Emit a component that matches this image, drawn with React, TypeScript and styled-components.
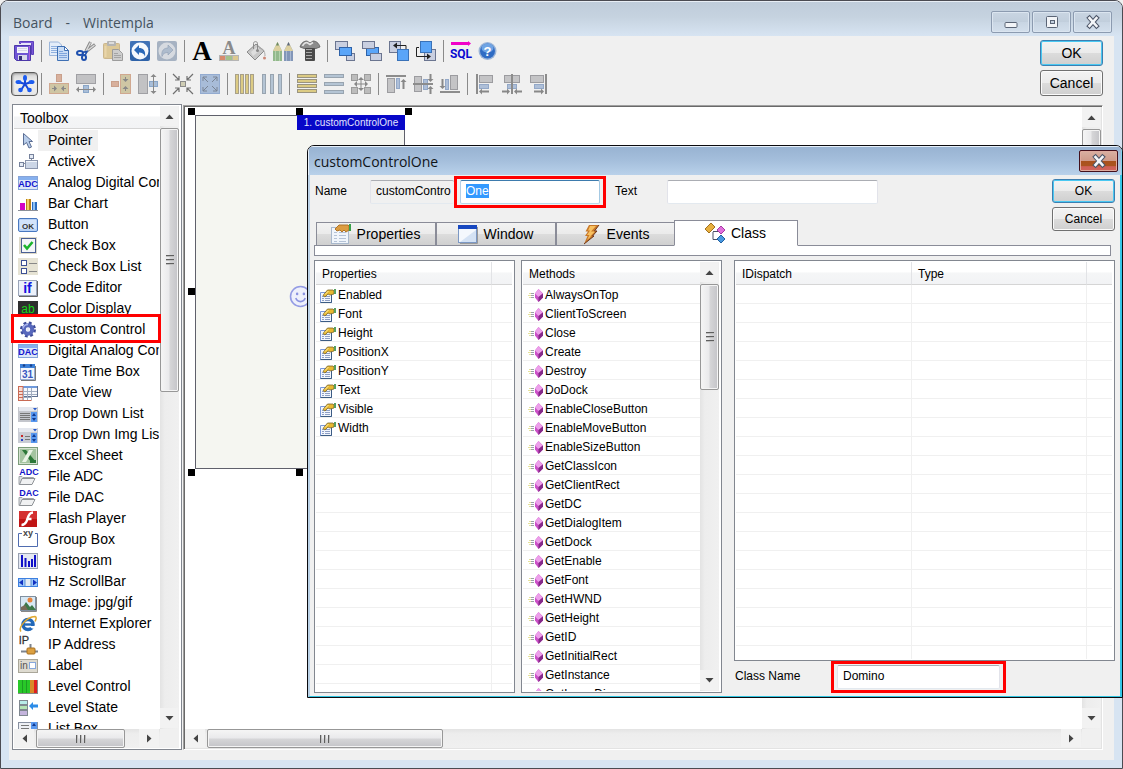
import React, { useEffect, useRef } from 'react';
import styled, { createGlobalStyle, css } from 'styled-components';

const GlobalStyle = createGlobalStyle`
  * { box-sizing: border-box; }
  body {
    margin: 0;
    background: #f0f0f0;
    font-family: "Liberation Sans", Arial, sans-serif;
    font-size: 12px;
    color: #000;
  }
  button, input { font-family: inherit; color: inherit; }
  ::selection { background: #3399ff; color: #fff; }
`;

/* ---------- window frames ---------- */

const Desktop = styled.div`
  position: relative;
  height: 100vh;
  min-height: 600px;
`;

const BoardWindow = styled.main`
  height: 100%;
  display: flex;
  flex-direction: column;
  border: 1px solid #4b4b52;
  border-radius: 8px 8px 0 0;
  background: #d7e4f2;
  overflow: hidden;
`;

const BoardTitle = styled.header`
  height: 35px;
  flex: none;
  display: flex;
  justify-content: space-between;
  padding: 9px 10px 0 12px;
  border-top: 1px solid #e8eef5;
  background: linear-gradient(#bfccda, #c6d3e0 45%, #d7e4f2);
`;

const TitleText = styled.h1<{ $tone: string }>`
  margin: 0;
  display: flex;
  gap: 13px;
  font: 14px/24px "Open Sans", "Noto Sans", sans-serif;
  color: ${(p) => p.$tone};
`;

const CaptionButtons = styled.div`
  display: flex;
  gap: 2px;
`;

const CaptionButton = styled.button`
  width: 39px;
  height: 22px;
  padding: 0;
  display: grid;
  place-items: center;
  border: 1px solid #8c9bb0;
  border-radius: 2px;
  background: linear-gradient(#c9d5e2, #c1cedc 50%, #c8d5e3 50%, #d3dfec);
  box-shadow: inset 0 0 0 1px #dbe5f0;
`;

const BoardClient = styled.div`
  flex: 1;
  min-height: 0;
  margin: 0 8px 8px;
  padding: 4px 11px 10px 3px;
  display: flex;
  flex-direction: column;
  background: #f0f0f0;
`;

/* ---------- toolbar ---------- */

const ToolArea = styled.div`
  height: 64px;
  flex: none;
  display: flex;
  justify-content: space-between;
`;

const ToolRows = styled.div`
  display: flex;
  flex-direction: column;
  gap: 13px;
  padding: 1px 0 0 2px;
`;

const ToolRow = styled.div`
  height: 20px;
  display: flex;
  align-items: center;
  gap: 7px;
`;

const ToolButton = styled.button<{ $pressed?: boolean }>`
  flex: none;
  width: 20px;
  height: 20px;
  padding: 0;
  border: 0;
  background: none;
  display: grid;
  place-items: center;
  ${(p) =>
    p.$pressed &&
    css`
      width: 27px;
      height: 24px;
      margin: 0 -4px 0 -3px;
      border: 1px solid #5a5a5a;
      border-radius: 4px;
      background: linear-gradient(#d2d2d2, #f0f0f0 40%, #e6e6e6);
      box-shadow: inset 1px 1px 2px #9a9a9a;
    `}
`;

const Separator = styled.span`
  flex: none;
  width: 1px;
  height: 22px;
  background: #8a8a8a;
`;

const Glyph = styled.svg<{ $w?: number; $h?: number }>`
  display: block;
  flex: none;
  overflow: visible;
  width: ${(p) => p.$w ?? 20}px;
  height: ${(p) => p.$h ?? 20}px;
`;

const ButtonColumn = styled.div<{ $top?: number }>`
  flex: none;
  width: 63px;
  display: flex;
  flex-direction: column;
  gap: 4px;
  padding-top: ${(p) => p.$top ?? 0}px;
`;

const PushButton = styled.button<{ $primary?: boolean; $small?: boolean }>`
  height: ${(p) => (p.$small ? 24 : 26)}px;
  padding: 0;
  font-size: ${(p) => (p.$small ? 12 : 14)}px;
  line-height: 16px;
  border: 1px solid ${(p) => (p.$primary ? '#3c7fb1' : '#707070')};
  border-radius: 3px;
  background: linear-gradient(#f3f3f3, #ebebeb 50%, #dcdcdc 50%, #cfcfcf);
  box-shadow: inset 0 0 0 1px ${(p) => (p.$primary ? '#49c8f2' : '#fbfbfb')};
`;

/* ---------- scroll bars ---------- */

const Bar = styled.div<{ $v?: boolean }>`
  flex: none;
  display: flex;
  flex-direction: ${(p) => (p.$v ? 'column' : 'row')};
  ${(p) => (p.$v ? 'width: 19px; padding-bottom: 1px;' : 'height: 19px; padding-right: 1px;')}
  background: linear-gradient(${(p) => (p.$v ? '90deg' : '180deg')}, #e3e3e3, #ededed 25%, #f0f0f0);
`;

const ArrowButton = styled.button<{ $v?: boolean }>`
  flex: none;
  ${(p) => (p.$v ? 'height: 20px; width: 18px;' : 'width: 20px; height: 18px;')}
  padding: 0;
  border: 0;
  display: grid;
  place-items: center;
  background: #f2f2f2;
`;

const Thumb = styled.div<{ $v?: boolean; $len: number }>`
  flex: 0 1 ${(p) => p.$len}px;
  ${(p) => (p.$v ? 'margin-top: 2px;' : 'margin-left: 2px;')}
  border: 1px solid #979797;
  border-radius: 2px;
  display: flex;
  flex-direction: ${(p) => (p.$v ? 'column' : 'row')};
  align-items: center;
  justify-content: center;
  gap: 2px;
  background: linear-gradient(
    ${(p) => (p.$v ? '90deg' : '180deg')},
    #f5f5f5, #e9e9eb 48%, #d6d6d8 52%, #c4c4c8
  );
  box-shadow: inset 0 0 0 1px #f4f4f4;
`;

const Grip = styled.i<{ $v?: boolean }>`
  ${(p) => (p.$v ? 'width: 8px; height: 2px;' : 'width: 2px; height: 8px;')}
  background: linear-gradient(${(p) => (p.$v ? '180deg' : '90deg')}, #5f5f5f 50%, #c0c0c0 50%);
`;

const Spring = styled.div`
  flex: 1;
`;

function Arrow({ dir }: { dir: 'up' | 'down' | 'left' | 'right' }) {
  const d = {
    up: 'M0.5 7 L4.5 2.5 L8.5 7Z',
    down: 'M0.5 2 L8.5 2 L4.5 6.5Z',
    left: 'M7 0.5 L2.5 4.5 L7 8.5Z',
    right: 'M2 0.5 L6.5 4.5 L2 8.5Z',
  }[dir];
  return (
    <Glyph $w={9} $h={9} viewBox="0 0 9 9">
      <path d={d} fill="#444" />
    </Glyph>
  );
}

function ScrollBar({ vertical, thumb }: { vertical?: boolean; thumb: number }) {
  return (
    <Bar $v={vertical}>
      <ArrowButton $v={vertical} aria-label="Scroll back">
        <Arrow dir={vertical ? 'up' : 'left'} />
      </ArrowButton>
      <Thumb $v={vertical} $len={thumb}>
        <Grip $v={vertical} />
        <Grip $v={vertical} />
        <Grip $v={vertical} />
      </Thumb>
      <Spring />
      <ArrowButton $v={vertical} aria-label="Scroll forward">
        <Arrow dir={vertical ? 'down' : 'right'} />
      </ArrowButton>
    </Bar>
  );
}

/* ---------- toolbox ---------- */

const Workspace = styled.div`
  flex: 1;
  min-height: 0;
  display: flex;
  gap: 1px;
`;

const ToolboxPanel = styled.aside`
  flex: none;
  width: 170px;
  display: flex;
  flex-direction: column;
  border: 1px solid #828790;
  padding: 1px 2px 1px 1px;
  background: #fff;
`;

const ToolboxBody = styled.div`
  flex: 1;
  min-height: 0;
  display: flex;
`;

const ToolboxColumn = styled.div`
  flex: 1;
  min-width: 0;
  overflow: hidden;
`;

const ToolboxHead = styled.h2`
  margin: 0;
  height: 23px;
  padding: 1px 0 0 6px;
  font-size: 14px;
  line-height: 22px;
  font-weight: normal;
  border-bottom: 1px solid #d5d5d5;
  background: linear-gradient(#fff 45%, #f4f5f6 50%, #f2f3f5);
`;

const ToolboxItems = styled.ul`
  list-style: none;
  margin: 0;
  padding: 1px 1px 0 4px;
`;

const ToolboxItem = styled.li`
  display: flex;
  height: 21px;
  align-items: center;
  overflow: hidden;
`;

const ToolboxLabel = styled.span<{ $current?: boolean }>`
  padding: 0 6px 0 10px;
  font-size: 14px;
  line-height: 21px;
  white-space: nowrap;
  background: ${(p) => (p.$current ? '#f0f0f0' : 'none')};
`;

const ToolboxMark = styled.div`
  position: absolute;
  left: 11px;
  top: 314px;
  width: 150px;
  height: 29px;
  border: 3px solid #f00;
`;

/* ---------- design canvas ---------- */

const CanvasPanel = styled.section`
  flex: 1;
  min-width: 0;
  margin-top: 1px;
  display: flex;
  flex-direction: column;
  border: 1px solid;
  border-color: #a0a0a0 #fff #fff #a0a0a0;
  box-shadow: inset 1px 1px 0 #696969, inset -1px -1px 0 #e3e3e3;
  padding: 1px;
  background: #f0f0f0;
`;

const CanvasBody = styled.div`
  flex: 1;
  min-height: 0;
  display: flex;
`;

const CanvasSurface = styled.div`
  flex: 1;
  position: relative;
  overflow: hidden;
  background: #fff;
`;

const BarRow = styled.div`
  display: flex;
  padding-right: 19px;
  background: #f0f0f0;
  & > * { flex: 1; }
`;

const DesignedControl = styled.div`
  position: absolute;
  left: 10px;
  top: 8px;
  width: 210px;
  height: 354px;
  padding-top: 8px;
  border: 1px solid #5f606b;
  background: #f5f6f1;
  display: grid;
  place-items: center;
`;

const ControlTag = styled.div`
  position: absolute;
  right: -1px;
  top: -1px;
  width: 108px;
  height: 15px;
  background: #0707c8;
  color: #e4e4ff;
  font-size: 10px;
  line-height: 15px;
  text-align: center;
  white-space: nowrap;
`;

const Handle = styled.i<{ $x: number; $y: number }>`
  position: absolute;
  left: ${(p) => p.$x}px;
  top: ${(p) => p.$y}px;
  width: 7px;
  height: 7px;
  background: #000;
`;

/* ---------- dialog ---------- */

const DialogWindow = styled.section`
  position: absolute;
  left: 307px;
  right: 0;
  top: 145px;
  bottom: 71px;
  display: flex;
  flex-direction: column;
  border: 1px solid #0b0b0f;
  border-radius: 7px 7px 0 0;
  background: #f0f0f0;
  overflow: hidden;
`;

const DialogTitle = styled.header`
  flex: none;
  height: 29px;
  display: flex;
  justify-content: space-between;
  padding: 3px 3px 0 5px;
  border-top: 1px solid #e6f0fa;
  border-left: 1px solid #e6f0fa;
  border-right: 1px solid #7fd3ee;
  background: linear-gradient(#98b3d2, #a5bfdc 50%, #b9d1ea);
`;

const DialogClose = styled.button`
  width: 39px;
  height: 22px;
  padding: 0;
  display: grid;
  place-items: center;
  border: 1px solid #43101c;
  border-radius: 2px;
  background: linear-gradient(#d9b0a2, #cf9b8b 48%, #a9511c 50%, #ab5420 75%, #cf6058 78%, #d0655c);
  box-shadow: inset 0 0 0 1px #dfab9f;
`;

const DialogBody = styled.div`
  flex: 1;
  min-height: 0;
  display: flex;
  flex-direction: column;
  padding-top: 1px;
  border-left: 2px solid #bcd3e8;
  border-right: 2px solid #35c8e8;
  border-bottom: 1px solid #2fc4e0;
`;

const DialogTop = styled.div`
  flex: none;
  height: 70px;
  display: flex;
  justify-content: space-between;
  padding: 0 5px;
`;

const DialogForm = styled.div`
  flex: 1;
  display: flex;
  flex-direction: column;
  gap: 12px;
`;

const FieldRow = styled.div`
  flex: none;
  height: 32px;
  display: flex;
  align-items: center;
`;

const FieldLabel = styled.label<{ $w: number; $gap?: number }>`
  flex: none;
  width: ${(p) => p.$w}px;
  margin-left: ${(p) => p.$gap ?? 0}px;
  padding-bottom: 3px;
  line-height: 16px;
`;

const TextField = styled.input<{ $w: number; $active?: boolean }>`
  flex: none;
  width: ${(p) => p.$w}px;
  height: 24px;
  padding: 0 5px 3px;
  font-size: 12px;
  border: 1px solid;
  border-color: ${(p) => (p.$active ? '#3d7bad #a4c9e3 #b7d9ed #b5cfe7' : '#abadb3 #e2e3ea #e3e9ef #e2e3ea')};
  border-radius: 2px;
  background: #fff;
  outline: none;
  &:read-only {
    background: #f0f0f0;
    padding-right: 0;
    border-right: 0;
  }
`;

const RedFrame = styled.div`
  flex: none;
  padding: 1px 3px;
  border: 3px solid #f00;
  display: flex;
`;

const Tabs = styled.div`
  display: flex;
  align-items: flex-end;
  height: 26px;
  padding-left: 1px;
`;

const Tab = styled.button<{ $selected?: boolean; $w: number }>`
  position: relative;
  width: ${(p) => p.$w}px;
  height: ${(p) => (p.$selected ? 26 : 24)}px;
  padding: 0 1px 1px 0;
  margin-left: ${(p) => (p.$selected ? -1 : 0)}px;
  display: flex;
  align-items: center;
  justify-content: center;
  gap: 6px;
  font-size: 14px;
  border: 1px solid #8a8c98;
  ${(p) =>
    p.$selected
      ? 'border-bottom-color: #fff; background: #fff; z-index: 1;'
      : 'background: linear-gradient(#f2f2f2, #ebebeb 48%, #dcdcdc 52%, #d0d0d0);'}
`;

const TabPane = styled.div`
  flex: none;
  height: 11px;
  margin: -1px 9px 4px 4px;
  border: 1px solid #8a8c98;
  background: #fff;
`;

const Lists = styled.div`
  flex: 1;
  min-height: 0;
  display: flex;
  padding: 0 5px 3px 4px;
`;

const ListPanel = styled.div<{ $fill?: boolean; $gap?: number }>`
  flex: ${(p) => (p.$fill ? '1 1 0' : '0 0 201px')};
  min-height: 0;
  margin-right: ${(p) => p.$gap ?? 0}px;
  display: flex;
  border: 1px solid #828790;
  padding: 1px 2px 1px 1px;
  background: #fff;
`;

const ListClip = styled.div`
  flex: 1;
  min-width: 0;
  overflow: hidden;
`;

const Grid = styled.table`
  width: 100%;
  table-layout: fixed;
  border-collapse: separate;
  border-spacing: 0;
`;

const HeadCell = styled.th<{ $w?: number }>`
  ${(p) => (p.$w ? `width: ${p.$w}px;` : '')}
  height: 23px;
  padding: 2px 0 0 6px;
  font-weight: normal;
  text-align: left;
  line-height: 16px;
  border-bottom: 1px solid #d5d5d5;
  background: linear-gradient(#fff 45%, #f5f6f7 50%, #f2f3f5);
  &:not(:last-child) { border-right: 1px solid #e2e3e6; }
`;

const Cell = styled.td<{ $indent?: number }>`
  height: 19px;
  padding: 3px 0 0 ${(p) => p.$indent ?? 4}px;
  line-height: 15px;
  border-bottom: 1px solid #f0f0f0;
  white-space: nowrap;
  &:not(:last-child) { border-right: 1px solid #f0f0f0; }
`;

const Entry = styled.span`
  display: flex;
  align-items: center;
  gap: 2px;
`;

const RightColumn = styled.div`
  flex: 1;
  min-width: 0;
  display: flex;
  flex-direction: column;
`;

/* ---------- icons, drawn on a 20 x 20 grid ---------- */

const small = { fontFamily: 'Liberation Sans', fontWeight: 700 } as const;

const arrowHead = (x: number, y: number, dir: 'l' | 'r' | 'u' | 'd') => {
  const d = {
    l: `M${x} ${y}l3 -3v6z`,
    r: `M${x} ${y}l-3 -3v6z`,
    u: `M${x} ${y}l-3 3h6z`,
    d: `M${x} ${y}l-3 -3h6z`,
  }[dir];
  return <path d={d} fill="#888" />;
};

const box = (x: number, y: number, w: number, h: number, fill: string, stroke: string) => (
  <rect x={x + 0.5} y={y + 0.5} width={w - 1} height={h - 1} fill={fill} stroke={stroke} />
);

const icons: Record<string, React.ReactNode> = {
  save: (
    <>
      <path d="M5.500 .5h14v13h-2v-11h-12z" fill="#7a5ad8" stroke="#5c40bc" />
      <path d="M7 2h10v2H7z" fill="#e8e6fa" />
      <path d="M.5 4.500h16v15H2.500l-2-2z" fill="#6f54d4" stroke="#4c38a8" />
      <rect x="3" y="6" width="11" height="6" fill="#f2f2fa" />
      <path d="M4 7.500h9M4 9.500h9" stroke="#d5d5e6" />
      <rect x="4" y="14" width="9" height="5" fill="#d8d8ea" />
      <rect x="5" y="15" width="3" height="4" fill="#33307a" />
      <path d="M15.500 5v14" stroke="#a95fe0" />
    </>
  ),
  copy: (
    <>
      <path d="M.5 1h9l3 3v10.500H.5z" fill="#e4edf9" stroke="#9cb6da" />
      <path d="M2 5.500h7M2 7.500h7M2 9.500h7M2 11.500h7" stroke="#8fb0de" />
      <path d="M8.500 5.500h7l4 4v10h-11z" fill="#c8dcf5" stroke="#3f70b4" />
      <path d="M15.500 5.500v4h4z" fill="#fff" stroke="#3f70b4" />
      <path d="M10 10.500h4M10 12.500h8M10 14.500h8M10 16.500h8" stroke="#7fa5dc" />
    </>
  ),
  cut: (
    <>
      <path d="M14.500 1 10 10M19 3.500 9 11.500" stroke="#8a8a8a" strokeWidth="3" />
      <path d="M14.500 1.500 10 10M18.500 4 9 11.500" stroke="#dcdcdc" strokeWidth="1.300" />
      <ellipse cx="4" cy="12" rx="3" ry="2" fill="none" stroke="#1d4fae" strokeWidth="2" />
      <ellipse cx="8" cy="16.500" rx="2" ry="2.600" fill="none" stroke="#1d4fae" strokeWidth="2" />
      <path d="M6.500 11.500 11 10.500l-2 4" stroke="#1d4fae" strokeWidth="1.600" fill="none" />
    </>
  ),
  paste: (
    <>
      <rect x=".5" y="2.500" width="16" height="15" rx="1" fill="#dcc898" stroke="#cbb68e" />
      <rect x="4" y="0" width="9" height="5" rx="1" fill="#b4b4b4" />
      <rect x="6" y="1" width="5" height="2" fill="#dcdcdc" />
      <path d="M2.500 5v11" stroke="#e9d5aa" strokeWidth="2" />
      <path d="M9.500 8.500h6l4 4v7h-10z" fill="#cdcdcd" stroke="#9c9c9c" />
      <path d="M11 12.500h4M11 14.500h7M11 16.500h7" stroke="#a4a4a4" />
    </>
  ),
  undo: (
    <>
      <rect width="20" height="20" rx="2" fill="#2e62a8" />
      <path d="M0 0h20v8H0z" fill="#4a7cc0" opacity=".6" />
      <circle cx="10" cy="10" r="8.500" fill="#f4f8fd" />
      <path d="M4 9l5-5v3c4 0 7 2.500 6 8.500-1-3-3-4-6-4V14z" fill="#2a68b8" />
    </>
  ),
  redo: (
    <>
      <rect width="20" height="20" rx="2" fill="#a6b2c2" />
      <circle cx="10" cy="10" r="8.500" fill="#d6dae0" />
      <path d="M16 9l-5-5v3c-4 0-7 2.500-6 8.500 1-3 3-4 6-4V14z" fill="#aebccd" stroke="#8e9eb4" strokeWidth=".6" />
    </>
  ),
  fontA: (
    <text x="10" y="19" textAnchor="middle" fontFamily="Liberation Serif" fontWeight="700" fontSize="27" fill="#000">A</text>
  ),
  fontColor: (
    <>
      <text x="10" y="13" textAnchor="middle" fontFamily="Liberation Serif" fontWeight="700" fontSize="18" fill="#8a8a8a">A</text>
      <rect x="0" y="14" width="20" height="6" fill="#b5b5b5" />
      <rect x="1" y="15" width="5" height="4" fill="#d88a6c" />
      <rect x="7" y="15" width="6" height="4" fill="#a4c08a" />
      <rect x="14" y="15" width="5" height="4" fill="#dcc890" />
    </>
  ),
  bucket: (
    <>
      <path d="M1 11 10 3l8 7-9 9z" fill="#c8c8c8" stroke="#8a8a8a" />
      <path d="M5 11l6-5 3 3-7 6z" fill="#dedede" />
      <path d="M7.500 8V2.500c0-2.500 4-2.500 4 0V9" fill="none" stroke="#8a8a8a" />
      <circle cx="11.500" cy="9.500" r="1.500" fill="#888" />
      <path d="M13 7c4 0 6 3 6 8" stroke="#aaa" fill="none" />
      <circle cx="18.500" cy="17" r="1.500" fill="#cc8a78" />
    </>
  ),
  pencils: (
    <>
      <path d="M0 10 4.500 1 9 10v10H0z" fill="#93b98c" />
      <path d="M0 10 4.500 1 9 10z" fill="#dcd0a0" />
      <path d="M4.500 1 3 4.500h3z" fill="#6c8a66" />
      <path d="M2.500 10v10M6.500 10v10" stroke="#b4d2ae" />
      <path d="M11 10l4.500-9L20 10v10h-9z" fill="#8296b8" />
      <path d="M11 10l4.500-9L20 10z" fill="#dcd0a0" />
      <path d="M15.500 1 14 4.500h3z" fill="#5c6880" />
      <path d="M13.500 10v10M17.500 10v10" stroke="#a8b8d2" />
    </>
  ),
  screw: (
    <>
      <path d="M0 6C1 2 4 0 7 0l3 2 3-2c3 0 6 2 7 6l-4 1.500H4z" fill="#8c8c8c" stroke="#5c5c5c" strokeWidth=".8" />
      <path d="M2.500 5c1-2 3-3.500 4.500-3.500L10 3.500l3-2" fill="none" stroke="#e4e4e4" strokeWidth="1.600" />
      <rect x="5" y="7" width="10" height="13" rx="1" fill="#4a4a4a" />
      <path d="M6 8.500h6M6 11.500h6M6 14.500h6M6 17.500h6" stroke="#a8a8a8" />
    </>
  ),
  front: (
    <>
      {box(0, 0, 13, 9, '#c9cfe0', '#6b7590')}
      {box(11, 12, 9, 8, '#c9cfe0', '#6b7590')}
      {box(4, 6, 13, 9, '#5aa5f8', '#2f62a8')}
    </>
  ),
  back: (
    <>
      {box(4, 6, 13, 9, '#5aa5f8', '#2f62a8')}
      {box(0, 0, 13, 8, '#c9cfe0', '#6b7590')}
      {box(8, 12, 12, 8, '#c9cfe0', '#6b7590')}
    </>
  ),
  forward: (
    <>
      {box(0, 0, 12, 12, '#c9cfe0', '#6b7590')}
      {box(8, 8, 12, 12, '#5aa5f8', '#3a72b8')}
      <path d="M7 4.500h10V8" fill="none" stroke="#222" />
      <path d="M4 4.500l4-3v6z" fill="#222" />
    </>
  ),
  backward: (
    <>
      {box(8, 8, 12, 12, '#c9cfe0', '#6b7590')}
      {box(4, 0, 12, 12, '#5aa5f8', '#3a72b8')}
      <path d="M3 6.500H.5v9H12" fill="none" stroke="#222" />
      <path d="M15 15.500l-4-3v6z" fill="#222" />
    </>
  ),
  sql: (
    <>
      <path d="M0 1h17V0l3 2.500L17 5V4H0z" fill="#f000c8" />
      <text x="10" y="17" textAnchor="middle" {...small} fontFamily="Roboto" fontSize="12" fill="#0a0ad0">SQL</text>
    </>
  ),
  help: (
    <>
      <circle cx="9.500" cy="10" r="9" fill="#9ab4d8" />
      <circle cx="9.500" cy="10" r="7.500" fill="#2f6cc4" />
      <ellipse cx="9.500" cy="7" rx="6" ry="4.500" fill="#6fa4e4" />
      <text x="9.500" y="15" textAnchor="middle" {...small} fontSize="13" fill="#fff">?</text>
    </>
  ),
  star: (
    <>
      <path d="M10 10V3M10 10 3.500 8M10 10l6.500-2M10 10l-4 6M10 10l4 6" stroke="#1748d8" strokeWidth="2" />
      <g fill="#1c5cf0">
        <ellipse cx="10" cy="4" rx="2" ry="3" />
        <ellipse cx="3.500" cy="8" rx="3" ry="2" />
        <ellipse cx="16.500" cy="8" rx="3" ry="2" />
        <circle cx="5.500" cy="16" r="2.300" />
        <circle cx="14.500" cy="16" r="2.300" />
      </g>
    </>
  ),
  centerH: (
    <>
      {box(7, 0, 6, 8, '#d8b09c', '#c9a08c')}
      {box(0, 9, 20, 11, '#cfc6a4', '#d0a890')}
      <path d="M3 14.500h4M13 14.500h4" stroke="#888" />
      {arrowHead(8, 14.5, 'r')}
      {arrowHead(12, 14.5, 'l')}
    </>
  ),
  widthSame: (
    <>
      {box(0, 0, 20, 10, '#c2c2c4', '#a0a0a4')}
      {box(7, 11, 6, 8, '#a9bed8', '#8aa6c8')}
      <path d="M2 15.500h16" stroke="#888" />
      {arrowHead(0, 15.5, 'l')}
      {arrowHead(20, 15.5, 'r')}
    </>
  ),
  centerV: (
    <>
      {box(0, 7, 8, 6, '#d8b09c', '#c9a08c')}
      {box(9, 0, 11, 20, '#cfc6a4', '#d0a890')}
      <path d="M14.500 3v4M14.500 13v4" stroke="#888" />
      {arrowHead(14.5, 8, 'd')}
      {arrowHead(14.5, 12, 'u')}
    </>
  ),
  heightSame: (
    <>
      {box(0, 0, 10, 20, '#c2c2c4', '#a0a0a4')}
      {box(11, 7, 9, 6, '#a9bed8', '#8aa6c8')}
      <path d="M15.500 2v16" stroke="#888" />
      {arrowHead(15.5, 0, 'u')}
      {arrowHead(15.5, 20, 'd')}
    </>
  ),
  shrink: (
    <>
      {box(7, 7, 6, 6, '#cfcdb4', '#8a8a8a')}
      <path d="M0 0l6 6M20 0l-6 6M0 20l6-6M20 20l-6-6M6 2v4H2M14 2v4h4M6 18v-4H2M14 18v-4h4" stroke="#707070" fill="none" strokeWidth="1.200" />
    </>
  ),
  expand: (
    <>
      {box(0, 0, 20, 20, '#a8bcd8', '#93abd0')}
      <path d="M3 3l5 5M17 3l-5 5M3 17l5-5M17 17l-5-5M3 7V3h4M13 3h4v4M3 13v4h4M13 17h4v-4" stroke="#7a8494" fill="none" />
    </>
  ),
  barsV4: <>{[0, 5, 10, 15].map((x) => <g key={x}>{box(x, 0, 4, 20, '#dccb84', '#a8a088')}</g>)}</>,
  barsV3: <>{[0, 8, 16].map((x) => <g key={x}>{box(x, 0, 4, 20, '#b4c4d4', '#98a4b0')}</g>)}</>,
  barsH4: <>{[0, 5, 10, 15].map((y) => <g key={y}>{box(0, y, 20, 4, '#dccb84', '#9a9480')}</g>)}</>,
  barsH3: <>{[0, 8, 16].map((y) => <g key={y}>{box(0, y, 20, 4, '#b4c4d4', '#98a4b0')}</g>)}</>,
  spread: (
    <>
      {box(0, 0, 7, 7, '#bcbcbc', '#9c9c9c')}
      {box(13, 0, 7, 7, '#bcbcbc', '#9c9c9c')}
      {box(0, 13, 7, 7, '#bcbcbc', '#9c9c9c')}
      {box(13, 13, 7, 7, '#bcbcbc', '#9c9c9c')}
      <path d="M10 5v10M5 10h10" stroke="#888" />
      {arrowHead(10, 3, 'u')}
      {arrowHead(10, 17, 'd')}
      {arrowHead(3, 10, 'l')}
      {arrowHead(17, 10, 'r')}
    </>
  ),
  alignTop: (
    <>
      <rect y="1" width="20" height="2" fill="#8c8c8c" />
      {box(1, 4, 8, 15, '#c4c4c6', '#9c9ca0')}
      {box(10, 4, 4, 11, '#aebfd8', '#93a8c8')}
      <path d="M17.500 7v8" stroke="#888" strokeWidth="2" />
      {arrowHead(17.5, 5, 'u')}
    </>
  ),
  alignMiddle: (
    <>
      {box(1, 2, 8, 16, '#c4c4c6', '#9c9ca0')}
      {box(10, 5, 5, 11, '#aebfd8', '#93a8c8')}
      <rect y="9" width="20" height="2" fill="#8c8c8c" />
      <path d="M17.500 0v5M17.500 20v-5" stroke="#888" strokeWidth="2" />
      {arrowHead(17.5, 8, 'd')}
      {arrowHead(17.5, 12, 'u')}
    </>
  ),
  alignBottom: (
    <>
      <rect y="17" width="20" height="2" fill="#8c8c8c" />
      {box(10, 1, 8, 15, '#c4c4c6', '#9c9ca0')}
      {box(5, 5, 4, 11, '#aebfd8', '#93a8c8')}
      <path d="M2.500 5v8" stroke="#888" strokeWidth="2" />
      {arrowHead(2.5, 15, 'd')}
    </>
  ),
  alignLeft: (
    <>
      <rect x="1" width="2" height="20" fill="#8c8c8c" />
      {box(4, 1, 14, 8, '#c4c4c6', '#9c9ca0')}
      {box(4, 10, 10, 5, '#aebfd8', '#93a8c8')}
      <path d="M7 17.500h7" stroke="#888" strokeWidth="2" />
      {arrowHead(4, 17.5, 'l')}
    </>
  ),
  alignCenter: (
    <>
      {box(2, 1, 16, 8, '#c4c4c6', '#9c9ca0')}
      {box(5, 10, 10, 5, '#aebfd8', '#93a8c8')}
      <rect x="9" width="2" height="20" fill="#8c8c8c" />
      <path d="M0 17.500h6M20 17.500h-6" stroke="#888" strokeWidth="2" />
      {arrowHead(8, 17.5, 'r')}
      {arrowHead(12, 17.5, 'l')}
    </>
  ),
  alignRight: (
    <>
      <rect x="16" width="2" height="20" fill="#8c8c8c" />
      {box(1, 1, 14, 8, '#c4c4c6', '#9c9ca0')}
      {box(5, 10, 10, 5, '#aebfd8', '#93a8c8')}
      <path d="M5 17.500h7" stroke="#888" strokeWidth="2" />
      {arrowHead(15, 17.5, 'r')}
    </>
  ),

  pointer: <path d="M5.500 2.500v11.500l3-2.500 2.500 5.500 2.500-1-2.500-5.500h3.500z" fill="#b8cdea" stroke="#5b6e94" />,
  activex: (
    <>
      <path d="M4 11.500h4M13.500 4v4" stroke="#8a93a4" />
      {box(11, 2, 5, 5, '#e4eaf4', '#76829c')}
      {box(1, 10, 5, 5, '#e4eaf4', '#76829c')}
      {box(7, 8, 13, 9, '#ccd6e6', '#8a95ac')}
      <path d="M8 9.500h11" stroke="#f2f6fb" />
    </>
  ),
  adc: (
    <>
      {box(0, 3, 20, 14, '#dde8f8', '#86a4d8')}
      <rect x="1" y="4" width="18" height="3" fill="#86b0ee" />
      <text x="10" y="14" textAnchor="middle" {...small} fontSize="9" fill="#1414d0">ADC</text>
    </>
  ),
  dac: (
    <>
      {box(0, 3, 20, 14, '#dde8f8', '#86a4d8')}
      <rect x="1" y="4" width="18" height="3" fill="#86b0ee" />
      <text x="10" y="14" textAnchor="middle" {...small} fontSize="9" fill="#1414d0">DAC</text>
    </>
  ),
  barChart: (
    <>
      <path d="M0 16.500h20" stroke="#8a8f98" />
      <rect x="2" y="9" width="5" height="7" fill="#d400c4" />
      <rect x="8" y="5" width="5" height="11" fill="#b8801c" />
      <rect x="9" y="5" width="2" height="11" fill="#f0cc60" />
      <rect x="14" y="8" width="5" height="8" fill="#2a6cc0" />
      <rect x="15" y="8" width="2" height="8" fill="#8fc0f4" />
    </>
  ),
  button: (
    <>
      <rect x=".5" y="3.500" width="19" height="13" rx="1.500" fill="#b8d2f6" stroke="#4878c0" />
      <rect x="2" y="5" width="16" height="9" fill="#d3e3fa" />
      <text x="10" y="14" textAnchor="middle" {...small} fontSize="8" fill="#333">OK</text>
    </>
  ),
  checkBox: (
    <>
      <rect x="1" y="1" width="18" height="17" fill="#ddd9c8" />
      {box(3, 2, 15, 15, '#f4f5f8', '#4a5f94')}
      <path d="M6 9l3 3.500L14.500 6" fill="none" stroke="#1cb42c" strokeWidth="2.600" />
    </>
  ),
  checkBoxList: (
    <>
      <rect x="0" y="1" width="20" height="17" fill="#e6e3d4" />
      {box(3, 3, 6, 6, '#fff', '#3c4f94')}
      {box(3, 11, 6, 6, '#fff', '#3c4f94')}
      <path d="M11 6.500h8M11 14.500h8" stroke="#888" />
    </>
  ),
  codeEditor: (
    <>
      <path d="M19.500 3v15.500H1" stroke="#666" fill="none" />
      {box(0, 2, 19, 16, '#ecf1fa', '#9aa4b8')}
      <text x="9.500" y="15" textAnchor="middle" {...small} fontSize="14" fill="#1414e0">if</text>
    </>
  ),
  colorDisplay: (
    <>
      <rect x="0" y="2" width="20" height="16" fill="#2e2e2e" />
      <text x="10" y="14" textAnchor="middle" fontFamily="Liberation Sans" fontSize="12" fill="#18d418">ab</text>
    </>
  ),
  custom: (
    <>
      <circle cx="10" cy="9.500" r="6.300" fill="none" stroke="#3c4a98" strokeWidth="3.400" strokeDasharray="2.600 2.350" />
      <circle cx="10" cy="9.500" r="4.200" fill="none" stroke="#5868bc" strokeWidth="4" />
      <circle cx="10" cy="9.500" r="1.500" fill="#e4e8f8" />
      <path d="M5 8.500a5 5 0 0 1 5-4" stroke="#a8b4ec" fill="none" strokeWidth="1.500" />
    </>
  ),
  dateTime: (
    <>
      <path d="M17.500 4v14.500H3" stroke="#777" fill="none" />
      {box(2, 2, 15, 16, '#f2f6fc', '#98aace')}
      <rect x="2" y="2" width="15" height="4" fill="#3c80d8" />
      <circle cx="6" cy="3.500" r="1.200" fill="#1a3f88" />
      <circle cx="13" cy="3.500" r="1.200" fill="#1a3f88" />
      <text x="9.500" y="15.500" textAnchor="middle" {...small} fontSize="10" fill="#3a58c0">31</text>
    </>
  ),
  dateView: (
    <>
      {box(0, 3, 20, 11, '#f6f8fc', '#5f7090')}
      <rect x="1" y="3" width="18" height="2" fill="#6f9adc" />
      <path d="M0 3.500h5v14H0z" fill="#f8dcd4" stroke="#d06850" />
      <path d="M1 8.500h18M1 11.500h18M1 14.500h13M5.500 5v12M9.500 5v12M13.500 5v12" stroke="#a0acc0" />
      <path d="M1 8.500h4M1 11.500h4M1 14.500h4M.5 3v14.500h13" stroke="#c86a54" fill="none" />
    </>
  ),
  dropDown: (
    <>
      <rect x="0" y="3" width="20" height="15" fill="#c4c6cc" />
      <rect x="1" y="3" width="18" height="4" fill="#e4e7ee" />
      <path d="M15 4h4l-2 2.500z" fill="#2858c8" />
      <path d="M2 9.500h10M2 11.500h10M2 13.500h10M2 15.500h10" stroke="#777" />
      <rect x="13" y="8" width="6" height="10" fill="#5898f0" />
      <path d="M14 12l2-3 2 3zM14 14l2 3 2-3z" fill="#123a90" />
    </>
  ),
  dropDownImg: (
    <>
      <rect x="0" y="3" width="20" height="15" fill="#c9ccd4" />
      <rect x="1" y="3" width="18" height="4" fill="#e4e7ee" />
      <path d="M15 4h4l-2 2.500z" fill="#2858c8" />
      <rect x="3" y="10" width="2" height="2" fill="#c82828" />
      <rect x="3" y="14" width="2" height="2" fill="#2840c8" />
      <path d="M7 11.500h5M7 14.500h5" stroke="#777" />
      <rect x="13" y="8" width="6" height="10" fill="#5898f0" />
      <path d="M14 12l2-3 2 3zM14 14l2 3 2-3z" fill="#123a90" />
    </>
  ),
  excel: (
    <>
      {box(0, 1, 20, 18, '#d4e2d0', '#7c9c7a')}
      <rect x="2" y="3" width="16" height="14" fill="#a4c4a0" />
      <path d="M4 4h4l10 12h-5z" fill="#2c7838" />
      <path d="M15 4h-4L4 16h4z" fill="#eaf3e6" />
      <path d="M12 14h6v3h-6z" fill="#2c7838" />
    </>
  ),
  fileAdc: (
    <>
      <path d="M1 9.500h3l1 1h10.500l-2.500 7H1z" fill="#dcdfe2" stroke="#a0a4a8" />
      <path d="M4 11.500h13l-3 6H1.500z" fill="#f0f1f2" stroke="#8e9296" />
      <text x="11" y="8" textAnchor="middle" {...small} fontSize="9" fill="#1414c8">ADC</text>
    </>
  ),
  fileDac: (
    <>
      <path d="M1 9.500h3l1 1h10.500l-2.500 7H1z" fill="#dcdfe2" stroke="#a0a4a8" />
      <path d="M4 11.500h13l-3 6H1.500z" fill="#f0f1f2" stroke="#8e9296" />
      <text x="11" y="8" textAnchor="middle" {...small} fontSize="9" fill="#1414c8">DAC</text>
    </>
  ),
  flash: (
    <>
      <rect x="1" y="2" width="18" height="16" fill="#c01414" />
      <rect x="1" y="2" width="18" height="8" fill="#d43030" />
      <path d="M15 3.500c-5 0-5 6-6.500 9S6 16 3.500 16M8.500 10h5" fill="none" stroke="#fff" strokeWidth="2.400" />
    </>
  ),
  groupBox: (
    <>
      <path d="M4 3.500H.5v13h19v-13H17" fill="none" stroke="#4f6cb0" />
      <text x="10" y="6" textAnchor="middle" {...small} fontSize="9" fill="#444">xy</text>
    </>
  ),
  histogram: (
    <>
      {box(0, 2, 20, 16, '#e4e8f2', '#98a0b0')}
      <path d="M4 4v12M7.500 7v9M11 10v6M14 8v8M17 4v12" stroke="#1010c8" strokeWidth="2" />
    </>
  ),
  hzScroll: (
    <>
      {box(0, 6, 20, 9, '#9cc6fa', '#3c80e0')}
      <rect x="7" y="7" width="6" height="7" fill="#e4ecf4" />
      <path d="M5 7.500v6l-4-3zM15 7.500v6l4-3z" fill="#1030c0" />
      <path d="M7 7v7M13 7v7" stroke="#5a90d8" />
    </>
  ),
  image: (
    <>
      <path d="M18.500 4v14.500H3" stroke="#888" fill="none" />
      {box(2, 3, 16, 15, '#d8e8f4', '#8090a0')}
      <circle cx="12" cy="7" r="2.500" fill="#e8843c" />
      <path d="M3 17l5-8 4 5 2-2 4 5z" fill="#3c7848" />
      <path d="M3 17v-3l4-2 3 5z" fill="#7a6a58" />
    </>
  ),
  explorer: (
    <>
      <circle cx="10" cy="10.500" r="5" fill="none" stroke="#2268b8" strokeWidth="3.600" />
      <path d="M6 10.500h9.500" stroke="#2268b8" strokeWidth="2.400" />
      <path d="M11 12h7v2.500h-4z" fill="#fff" />
      <path d="M3 17.500C0 14 8 3 17 2.500c2 .5 1 3 0 5" fill="none" stroke="#e0a830" strokeWidth="1.500" />
    </>
  ),
  ip: (
    <>
      <text x="6" y="9" textAnchor="middle" fontFamily="Liberation Sans" fontSize="11" fill="#333" stroke="#333" strokeWidth=".3">IP</text>
      <path d="M3 16.500h17M12.500 9v5" stroke="#7d848e" strokeWidth="2" />
      <rect x="9" y="13" width="8" height="6" rx="1" fill="#dca040" stroke="#a87020" />
    </>
  ),
  label: (
    <>
      {box(0, 3, 20, 14, '#dedbd0', '#aaa79a')}
      <text x="6" y="13" textAnchor="middle" fontFamily="Liberation Sans" fontSize="10" fill="#555">in</text>
      {box(11, 6, 7, 7, '#fff', '#88a8dc')}
    </>
  ),
  levelControl: (
    <>
      <rect x="0" y="3" width="20" height="14" fill="#888" />
      <rect x="0" y="3" width="12" height="13" fill="#28c828" />
      <rect x="12" y="3" width="4" height="13" fill="#d88a28" />
      <rect x="16" y="3" width="3" height="13" fill="#e02020" />
      <path d="M4.500 3v13M8.500 3v13" stroke="#1d9c24" />
    </>
  ),
  levelState: (
    <>
      {box(1, 2, 9, 5, '#b8ece8', '#808890')}
      {box(1, 7, 9, 5, '#b4e4b4', '#808890')}
      {box(1, 12, 9, 6, '#c4b4dc', '#808890')}
      <path d="M11 8l4-4v2.500h5v3h-5V12z" fill="#2c8ce8" />
    </>
  ),
  listBox: (
    <>
      {box(0, 3, 20, 15, '#eef0f4', '#8890a0')}
      <path d="M3 6.500h8M3 9.500h8" stroke="#777" />
      <rect x="13" y="3" width="6" height="7" fill="#5898f0" />
      <path d="M14 7l2-3 2 3z" fill="#123a90" />
    </>
  ),
  propertyTab: (
    <>
      {box(0, 3, 18, 17, '#f0f5fb', '#a8b8cc')}
      <path d="M3 8.500h3M8 8.500h7M3 11.500h3M8 11.500h7M3 14.500h3M8 14.500h7M3 17.500h3M8 17.500h7" stroke="#b4c2d6" />
      <path d="M4 5l4-4h9l1 1v4l-3 2-2-2-2 2-2-2-3 1z" fill="#dc9c40" stroke="#b07428" />
      <rect x="18" y="0" width="2" height="7" fill="#38a048" />
    </>
  ),
  window: (
    <>
      <path d="M19.500 3v16.500H2" stroke="#999" fill="none" />
      {box(0, 2, 19, 17, '#f4f8fd', '#7c98c4')}
      <rect x="0" y="1" width="19" height="4" fill="#1848c0" />
      <path d="M18 6v12H2z" fill="#d4e2f4" />
    </>
  ),
  bolt: (
    <>
      <path d="M8 1h10l-4.500 6H16l-4.500 5H13L3 20l3.500-8H4l3-4.500H4.500z" fill="#c87828" />
      <path d="M9 2h6l-5 5.500h4L9 12.500h1L6 16l2.500-5H6l3-4.500H7z" fill="#f8c060" />
      <path d="M18 1l-4.500 6H16l-4.500 5H13L3 20" stroke="#6e3418" fill="none" />
    </>
  ),
  classes: (
    <>
      <path d="M8 9v7.500h5M8 8.500h6" stroke="#4a5068" fill="none" />
      <path d="M0 6l6-6 4 4-6 6z" fill="#e8b040" stroke="#a07020" />
      <path d="M12 7l4-4 4 4-4 4z" fill="#e070dc" stroke="#a838a4" />
      <path d="M12 16l4-4 4 4-4 4z" fill="#4898e0" stroke="#2060a0" />
    </>
  ),
  smiley: (
    <>
      <circle cx="10" cy="10" r="9.500" fill="#eef0fb" stroke="#949ce4" strokeWidth="1.500" />
      <circle cx="6.800" cy="7.500" r="1.200" fill="#8a92e0" />
      <circle cx="13.200" cy="7.500" r="1.200" fill="#8a92e0" />
      <path d="M5.500 11.500c1.500 4.500 7.500 4.500 9 0" fill="none" stroke="#8a92e0" strokeWidth="1.500" />
    </>
  ),
};

function Icon({ name, size = 20 }: { name: string; size?: number }) {
  return (
    <Glyph $w={size} $h={size} viewBox="0 0 20 20" aria-hidden="true">
      {icons[name]}
    </Glyph>
  );
}

function PropertyIcon() {
  return (
    <Glyph $w={16} $h={14} viewBox="0 0 16 14" aria-hidden="true">
      <path d="M.5 3.500h11v10H.5z" fill="#f2f6fd" stroke="#7a98d8" />
      <path d="M11.500 6v7.500H.5" stroke="#3c5c84" fill="none" />
      <path d="M2 7.500h2M5 7.500h5M2 9.500h2M5 9.500h5M2 11.500h2M5 11.500h5" stroke="#8e9fc4" />
      <path d="M3 6.500 7.500 1H13l1 1v3l-4 1-2-1-3 3z" fill="#e8b830" stroke="#7a6428" strokeWidth=".8" />
      <path d="M5 5.500 8.500 2" stroke="#fff0a8" />
      <rect x="14" y="0" width="2" height="5" fill="#58a060" />
    </Glyph>
  );
}

function MethodIcon() {
  return (
    <Glyph $w={15} $h={14} viewBox="0 0 15 14" aria-hidden="true">
      <path d="M1 4.500h3M1 8.500h3M0 6.500h3" stroke="#e6e29a" />
      <path d="M3 4.500h3M3 8.500h3M3 6.500h3" stroke="#9aa0a8" />
      <path d="M10.500 0 15 4.500v4L10.500 13 7 8.500v-4z" fill="#cc50c8" />
      <path d="M10.500 0 14.500 4.500 10.500 8 7 4.500z" fill="#eca0ea" />
      <path d="M10.500 8 15 4.500v4L10.500 13z" fill="#842a88" />
    </Glyph>
  );
}

/* ---------- data ---------- */

const fileTools = [
  'save', '|', 'copy', 'cut', 'paste', 'undo', 'redo', '|', 'fontA', 'fontColor', 'bucket', 'pencils',
  'screw', '|', 'front', 'back', 'forward', 'backward', '|', 'sql', 'help',
];

const alignTools = [
  'star', '|', 'centerH', 'widthSame', '|', 'centerV', 'heightSame', '|', 'shrink', 'expand', '|', 'barsV4',
  'barsV3', '|', 'barsH4', 'barsH3', 'spread', '|', 'alignTop', 'alignMiddle', 'alignBottom', '|',
  'alignLeft', 'alignCenter', 'alignRight',
];

const toolboxEntries: [string, string][] = [
  ['pointer', 'Pointer'], ['activex', 'ActiveX'], ['adc', 'Analog Digital Converter'],
  ['barChart', 'Bar Chart'], ['button', 'Button'], ['checkBox', 'Check Box'],
  ['checkBoxList', 'Check Box List'], ['codeEditor', 'Code Editor'], ['colorDisplay', 'Color Display'],
  ['custom', 'Custom Control'], ['dac', 'Digital Analog Converter'], ['dateTime', 'Date Time Box'],
  ['dateView', 'Date View'], ['dropDown', 'Drop Down List'], ['dropDownImg', 'Drop Dwn Img List'],
  ['excel', 'Excel Sheet'], ['fileAdc', 'File ADC'], ['fileDac', 'File DAC'], ['flash', 'Flash Player'],
  ['groupBox', 'Group Box'], ['histogram', 'Histogram'], ['hzScroll', 'Hz ScrollBar'],
  ['image', 'Image: jpg/gif'], ['explorer', 'Internet Explorer'], ['ip', 'IP Address'], ['label', 'Label'],
  ['levelControl', 'Level Control'], ['levelState', 'Level State'], ['listBox', 'List Box'],
];

const properties = ['Enabled', 'Font', 'Height', 'PositionX', 'PositionY', 'Text', 'Visible', 'Width'];

const methods = [
  'AlwaysOnTop', 'ClientToScreen', 'Close', 'Create', 'Destroy', 'DoDock', 'EnableCloseButton',
  'EnableMoveButton', 'EnableSizeButton', 'GetClassIcon', 'GetClientRect', 'GetDC', 'GetDialogItem',
  'GetDock', 'GetEnable', 'GetFont', 'GetHWND', 'GetHeight', 'GetID', 'GetInitialRect', 'GetInstance',
  'GetLayerDims',
];

const handles = [
  [3, 1], [111, 1], [220, 1],
  [3, 181], [220, 181],
  [3, 362], [111, 362], [220, 362],
];

const blank = (n: number) => Array.from({ length: n }, (_, i) => i);

/* ---------- parts ---------- */

function Toolbar({ tools }: { tools: string[] }) {
  return (
    <ToolRow>
      {tools.map((t, i) =>
        t === '|' ? (
          <Separator key={i} />
        ) : (
          <ToolButton key={i} aria-label={t} $pressed={t === 'star'}>
            <Icon name={t} />
          </ToolButton>
        ),
      )}
    </ToolRow>
  );
}

function Toolbox() {
  return (
    <ToolboxPanel>
      <ToolboxBody>
        <ToolboxColumn>
          <ToolboxHead>Toolbox</ToolboxHead>
          <ToolboxItems>
            {toolboxEntries.map(([icon, label], i) => (
              <ToolboxItem key={label}>
                <Icon name={icon} />
                <ToolboxLabel $current={i === 0}>{label}</ToolboxLabel>
              </ToolboxItem>
            ))}
          </ToolboxItems>
        </ToolboxColumn>
        <ScrollBar vertical thumb={264} />
      </ToolboxBody>
      <BarRow>
        <ScrollBar thumb={89} />
      </BarRow>
    </ToolboxPanel>
  );
}

function DesignCanvas() {
  return (
    <CanvasPanel>
      <CanvasBody>
        <CanvasSurface>
          <DesignedControl>
            <ControlTag>1. customControlOne</ControlTag>
            <Icon name="smiley" size={21} />
          </DesignedControl>
          {handles.map(([x, y]) => (
            <Handle key={`${x}-${y}`} $x={x} $y={y} />
          ))}
        </CanvasSurface>
        <ScrollBar vertical thumb={300} />
      </CanvasBody>
      <BarRow>
        <ScrollBar thumb={236} />
      </BarRow>
    </CanvasPanel>
  );
}

function CloseMark() {
  return (
    <Glyph $w={14} $h={12} viewBox="0 0 14 12">
      <path d="M3.500 2l7 8M10.500 2l-7 8" stroke="#4d5668" strokeWidth="4.600" strokeLinecap="square" />
      <path d="M3.500 2l7 8M10.500 2l-7 8" stroke="#f4f6f9" strokeWidth="2.600" strokeLinecap="square" />
    </Glyph>
  );
}

function ControlDialog() {
  const nameRef = useRef<HTMLInputElement>(null);
  useEffect(() => {
    nameRef.current?.focus();
    nameRef.current?.select();
  }, []);

  return (
    <DialogWindow role="dialog" aria-label="customControlOne">
      <DialogTitle>
        <TitleText as="h2" $tone="#101418">customControlOne</TitleText>
        <DialogClose aria-label="Close">
          <CloseMark />
        </DialogClose>
      </DialogTitle>
      <DialogBody>
        <DialogTop>
          <DialogForm>
            <FieldRow>
              <FieldLabel htmlFor="prefix" $w={55}>Name</FieldLabel>
              <TextField id="prefix" $w={84} readOnly value="customContro" />
              <RedFrame>
                <TextField ref={nameRef} aria-label="Name" $w={140} $active defaultValue="One" />
              </RedFrame>
              <FieldLabel htmlFor="text" $w={52} $gap={9}>Text</FieldLabel>
              <TextField id="text" $w={211} defaultValue="" />
            </FieldRow>
            <Tabs role="tablist">
              <Tab role="tab" $w={120}><Icon name="propertyTab" />Properties</Tab>
              <Tab role="tab" $w={120}><Icon name="window" />Window</Tab>
              <Tab role="tab" $w={119}><Icon name="bolt" />Events</Tab>
              <Tab role="tab" aria-selected $selected $w={124}><Icon name="classes" />Class</Tab>
            </Tabs>
          </DialogForm>
          <ButtonColumn $top={3}>
            <PushButton $small $primary>OK</PushButton>
            <PushButton $small>Cancel</PushButton>
          </ButtonColumn>
        </DialogTop>
        <TabPane />
        <Lists>
          <ListPanel $gap={6}>
            <ListClip>
              <Grid>
                <thead>
                  <tr>
                    <HeadCell $w={176}>Properties</HeadCell>
                    <HeadCell />
                  </tr>
                </thead>
                <tbody>
                  {properties.map((p) => (
                    <tr key={p}>
                      <Cell><Entry><PropertyIcon />{p}</Entry></Cell>
                      <Cell />
                    </tr>
                  ))}
                  {blank(14).map((i) => (
                    <tr key={i}><Cell /><Cell /></tr>
                  ))}
                </tbody>
              </Grid>
            </ListClip>
          </ListPanel>
          <ListPanel $gap={12}>
            <ListClip>
              <Grid>
                <thead>
                  <tr><HeadCell>Methods</HeadCell></tr>
                </thead>
                <tbody>
                  {methods.map((m) => (
                    <tr key={m}>
                      <Cell $indent={5}><Entry><MethodIcon />{m}</Entry></Cell>
                    </tr>
                  ))}
                </tbody>
              </Grid>
            </ListClip>
            <ScrollBar vertical thumb={106} />
          </ListPanel>
          <RightColumn>
            <ListPanel $fill>
              <ListClip>
                <Grid>
                  <thead>
                    <tr>
                      <HeadCell $w={176}>IDispatch</HeadCell>
                      <HeadCell $w={175}>Type</HeadCell>
                      <HeadCell />
                    </tr>
                  </thead>
                  <tbody>
                    {blank(20).map((i) => (
                      <tr key={i}><Cell /><Cell /><Cell /></tr>
                    ))}
                  </tbody>
                </Grid>
              </ListClip>
            </ListPanel>
            <FieldRow>
              <FieldLabel htmlFor="className" $w={96} $gap={1}>Class Name</FieldLabel>
              <RedFrame>
                <TextField id="className" $w={163} defaultValue="Domino" />
              </RedFrame>
            </FieldRow>
          </RightColumn>
        </Lists>
      </DialogBody>
    </DialogWindow>
  );
}

export default function App() {
  return (
    <>
      <GlobalStyle />
      <Desktop>
        <BoardWindow>
          <BoardTitle>
            <TitleText $tone="#45535f">
              <span>Board</span>
              <span>-</span>
              <span>Wintempla</span>
            </TitleText>
            <CaptionButtons>
              <CaptionButton aria-label="Minimize">
                <Glyph $w={14} $h={12} viewBox="0 0 14 12">
                  <rect x="1" y="6.500" width="12" height="5" rx="1" fill="#f2f4f7" stroke="#5a6475" />
                </Glyph>
              </CaptionButton>
              <CaptionButton aria-label="Restore">
                <Glyph $w={14} $h={12} viewBox="0 0 14 12">
                  <rect x="1.500" y=".5" width="11" height="11" rx="1" fill="#f2f4f7" stroke="#5a6475" />
                  <rect x="5.500" y="4.500" width="4" height="3" fill="#c4d0de" stroke="#5a6475" />
                </Glyph>
              </CaptionButton>
              <CaptionButton aria-label="Close">
                <CloseMark />
              </CaptionButton>
            </CaptionButtons>
          </BoardTitle>
          <BoardClient>
            <ToolArea>
              <ToolRows>
                <Toolbar tools={fileTools} />
                <Toolbar tools={alignTools} />
              </ToolRows>
              <ButtonColumn>
                <PushButton $primary>OK</PushButton>
                <PushButton>Cancel</PushButton>
              </ButtonColumn>
            </ToolArea>
            <Workspace>
              <Toolbox />
              <DesignCanvas />
            </Workspace>
          </BoardClient>
        </BoardWindow>
        <ToolboxMark />
        <ControlDialog />
      </Desktop>
    </>
  );
}
